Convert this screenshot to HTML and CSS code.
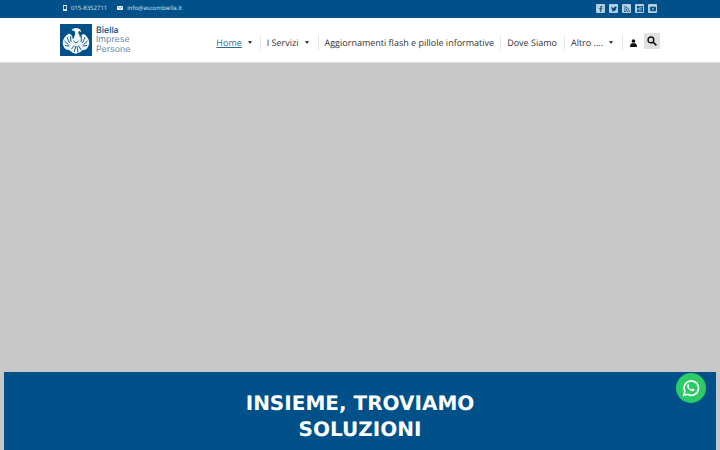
FILE: index.html
```html
<!DOCTYPE html>
<html>
<head>
    <title>Biella Imprese Persone</title>
    <link rel="stylesheet" href="styles.css">
</head>
<body>
    <div class="topbar">
        <div class="topbar-left">
            <span class="contact">
                <svg class="contact-icon" width="4" height="6" viewBox="0 0 6 8" preserveAspectRatio="none"><path fill="#fff" fill-rule="evenodd" d="M1 0h4a1 1 0 0 1 1 1v6a1 1 0 0 1-1 1H1a1 1 0 0 1-1-1V1a1 1 0 0 1 1-1zm0 1.200v4.600h4V1.200z"/></svg>
                015-8352711
            </span>
            <span class="contact">
                <svg class="contact-icon" width="6" height="4" viewBox="0 0 7 5" preserveAspectRatio="none"><rect width="7" height="5" rx="1" fill="#fff"/><path d="M0.500 1L3.500 3L6.500 1" fill="none" stroke="#00508a" stroke-width="0.700"/></svg>
                info@ascombiella.it
            </span>
        </div>
        <div class="social">
            <span class="social-item"><svg width="7" height="7" viewBox="0 0 7 7"><path fill="#00508a" d="M3.800 7V3.800h1.100l.2-1.200H3.800v-.7c0-.4.100-.6.600-.6h.7V.2C5 .1 4.600 0 4.200 0 3.200 0 2.600.6 2.600 1.700v.9H1.500v1.200h1.100V7z"/></svg></span>
            <span class="social-item"><svg width="8" height="7" viewBox="0 0 8 7"><path fill="#00508a" d="M8 1a3 3 0 0 1-.9.300c.3-.2.600-.5.700-.9-.3.200-.7.300-1 .4A1.600 1.600 0 0 0 4 2.200C2.700 2.100 1.500 1.500.6.500c-.4.700-.2 1.600.5 2.100-.3 0-.5-.1-.7-.2 0 .8.500 1.400 1.300 1.600-.2.100-.5.100-.7 0 .2.600.800 1.100 1.500 1.100A3.300 3.300 0 0 1 0 5.800 4.600 4.600 0 0 0 7.200 1.800c.3-.2.600-.5.800-.8z"/></svg></span>
            <span class="social-item"><svg width="7" height="7" viewBox="0 0 7 7"><circle cx="1" cy="6" r="1" fill="#00508a"/><path d="M0 3a4 4 0 0 1 4 4M0 .8A6.200 6.200 0 0 1 6.200 7" fill="none" stroke="#00508a" stroke-width="1"/></svg></span>
            <span class="social-item"><svg width="7" height="7" viewBox="0 0 7 7"><path fill="#00508a" d="M0 0h3v3H0zM4 0h3v7H4zM0 4h3v3H0z"/><path fill="#fff" d="M5 1.500h1v1H5zM5 4h1v1H5z"/></svg></span>
            <span class="social-item"><svg width="7" height="5" viewBox="0 0 7 5"><rect width="7" height="5" rx="1.200" fill="#00508a"/><path d="M2.800 1.300v2.400L4.800 2.500z" fill="#fff"/></svg></span>
        </div>
    </div>

    <div class="header">
        <div class="logo">
            <div class="logo-mark">
                <svg width="32" height="32" viewBox="0 0 32 32">
                    <rect width="32" height="32" fill="#00508a"/>
                    <!-- head and neck -->
                    <path fill="#f2f6f9" d="M12 5.500c2-1.800 5.500-2 7.500-.6 1.200.8 1.600 1.800 1.800 3l-2.300-1c-1 1-.6 2.500.4 4l1 4-7 0 1.400-4c.6-1.600.4-3-.6-4-.8-.4-1.600-.4-2.500-.2z"/>
                    <!-- wings -->
                    <path fill="#f2f6f9" d="M9 9.500c2 .6 3.400 2.200 3.600 4.500l.4 8-2 3.500c-2 .8-4 .6-5.600-.6-1.800-1.800-3-4.400-2.600-7 .4-3.400 3-6.800 6.200-8.400z"/>
                    <path fill="#f2f6f9" d="M24 10c-2 .4-3.600 2-4 4.200l-.6 8 2.200 3.400c2 .8 3.800.4 5.200-.8 1.800-2 2.700-4.600 2.300-7.200-.4-3.200-2.600-6-5.100-7.600z"/>
                    <!-- body and tail -->
                    <path fill="#f2f6f9" d="M12 15h8l1 8 2 3-3.500 2.500-3.500 1.200-3.500-1-3.500-2.700 2-3z"/>
                    <!-- feathers -->
                    <path fill="none" stroke="#00508a" stroke-width=".9" d="M7 13l2.500 6M4.500 17l4 3.500M5 21.500l4.500 .5M10.500 12l.5 6M25 13l-2.500 6M27.500 17l-4 3.500M27 21.500l-4.500 .5M21.500 12l-.5 6M11.500 25l3-3.500M14 28l2-6M18 28.500l-1-6.500M21 26l-2.500-4.500M13.500 17l2.500 2 2.500-2"/>
                </svg>
            </div>
            <div class="logo-text">
                <span class="logo-name">Biella</span>
                <span>Imprese</span>
                <span>Persone</span>
            </div>
        </div>

        <div class="nav">
            <a class="nav-item active">Home <i class="caret"></i></a>
            <a class="nav-item">I Servizi <i class="caret"></i></a>
            <a class="nav-item">Aggiornamenti flash e pillole informative</a>
            <a class="nav-item dove">Dove Siamo</a>
            <a class="nav-item">Altro .... <i class="caret"></i></a>
            <a class="nav-item user">
                <svg width="7" height="8" viewBox="0 0 8 9"><circle cx="4" cy="2.200" r="2.100" fill="#111"/><path d="M0 9c0-2.500 1-4 2.500-4.200h3C7 5 8 6.500 8 9z" fill="#111"/></svg>
            </a>
            <a class="search">
                <svg width="10" height="10" viewBox="0 0 10 10"><circle cx="3.900" cy="3.900" r="2.900" fill="none" stroke="#111" stroke-width="1.400"/><path d="M6 6l3.400 3.400" stroke="#111" stroke-width="1.600"/></svg>
            </a>
        </div>
    </div>

    <div class="hero"></div>

    <div class="banner">
        <h1>INSIEME, TROVIAMO<br>SOLUZIONI</h1>
    </div>

    <a class="whatsapp">
        <svg width="18" height="18" viewBox="0 0 20 20">
            <path fill="none" stroke="#fff" stroke-width="1.800" d="M2 18l1.200-4.300A8 8 0 1 1 6.300 17z"/>
            <path fill="#fff" d="M7.400 5.600c-.3 0-.7.100-1 .5-.4.500-.8 1.200-.7 2.100.1 1 .7 2 1.600 3 1.100 1.200 2.300 2 3.600 2.400.9.200 1.700 0 2.200-.4.500-.4.700-1 .7-1.500 0-.2-.1-.3-.3-.4l-1.600-.8c-.2-.1-.4 0-.5.100l-.7.900c-.1.100-.3.100-.4.100-1.300-.5-2.400-1.500-3-2.700-.1-.2 0-.3.100-.4l.5-.6c.1-.2.100-.3.100-.5l-.7-1.600c-.1-.2-.2-.2-.4-.2z"/>
        </svg>
    </a>
</body>
</html>
```

FILE: styles.css
```css
html, body {
    height: 450px;
    overflow: hidden;
}

body {
    margin: 0;
    padding: 0;
    background-color: #c8c8c8;
    font-family: 'Open Sans', sans-serif;
    text-rendering: geometricPrecision;
}

.topbar {
    height: 18px;
    box-sizing: border-box;
    padding: 0 63px 1px 63px;
    background-color: #00508a;
    display: flex;
    justify-content: space-between;
    align-items: center;
}

.topbar-left {
    display: flex;
    gap: 10px;
    margin-bottom: 1px;
}

.contact {
    display: flex;
    align-items: center;
    gap: 4px;
    color: #d9e6f0;
    font-size: 6px;
}

.contact-icon {
    flex-shrink: 0;
}

.social {
    display: flex;
    gap: 4px;
}

.social-item {
    width: 9px;
    height: 9px;
    background-color: #b4cde0;
    border-radius: 1px;
    display: flex;
    align-items: center;
    justify-content: center;
}

.social-item svg {
    width: 6px;
    height: 6px;
}

.header {
    height: 44px;
    box-sizing: border-box;
    padding: 0 60px;
    background-color: #ffffff;
    display: flex;
    justify-content: space-between;
    align-items: center;
}

.logo {
    display: flex;
    align-items: center;
    gap: 4px;
}

.logo-mark {
    display: flex;
}

.logo-text {
    display: flex;
    flex-direction: column;
    font-family: 'Inter', sans-serif;
    font-size: 8.800px;
    line-height: 9.500px;
    color: #5f8bab;
}

.logo-name {
    color: #00508a;
    font-weight: 500;
}

.nav {
    display: flex;
    align-items: center;
    margin-top: 5px;
}

.nav-item {
    display: flex;
    align-items: center;
    height: 15px;
    padding: 0 6px;
    border-right: 1px solid #e6e6e6;
    color: #333333;
    font-size: 9px;
    white-space: nowrap;
}

.nav-item.active {
    color: #2d6a96;
    text-decoration: underline;
}

.nav-item.dove {
    padding-right: 7px;
}

.caret {
    width: 0;
    height: 0;
    margin-left: 6px;
    margin-right: 3px;
    border-left: 2px solid transparent;
    border-right: 2px solid transparent;
    border-top: 3px solid #333333;
}

.nav-item.active .caret {
    margin-right: 2px;
}

.nav-item.user {
    padding: 0 7px;
    border-right: none;
}

.search {
    width: 16px;
    height: 16px;
    margin-top: -4px;
    background-color: #e0e0e0;
    display: flex;
    align-items: center;
    justify-content: center;
}

.hero {
    height: 310px;
    background-color: #c8c8c8;
    border-top: 1px solid #dcdcdc;
    box-sizing: border-box;
}

.banner {
    margin: 0 4px;
    height: 90px;
    background-color: #00508a;
    padding-top: 18px;
    box-sizing: border-box;
}

.banner h1 {
    margin: 0;
    text-align: center;
    color: #ffffff;
    font-family: 'DejaVu Sans', sans-serif;
    font-size: 20px;
    font-weight: 700;
    line-height: 26px;
}

.whatsapp {
    position: fixed;
    left: 676px;
    top: 373px;
    width: 30px;
    height: 30px;
    border-radius: 50%;
    background-color: #2dcb66;
    display: flex;
    align-items: center;
    justify-content: center;
}
```
